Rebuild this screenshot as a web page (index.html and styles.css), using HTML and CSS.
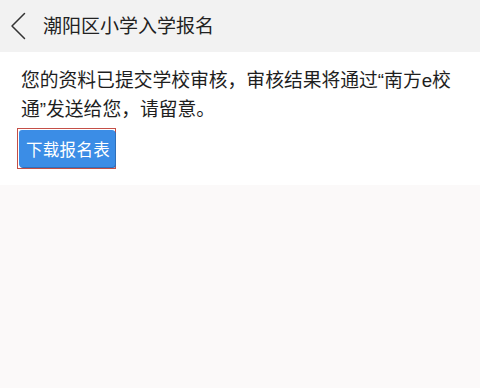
FILE: index.html
```html
<!DOCTYPE html>
<html lang="zh-CN">
<head>
<meta charset="utf-8">
<title>潮阳区小学入学报名</title>
<link rel="stylesheet" href="styles.css">
</head>
<body>
<header class="topbar">
  <svg class="back" width="16" height="28" viewBox="0 0 16 28" aria-hidden="true">
    <path d="M14.5 1.5 L2 14 L14.5 26.5" fill="none" stroke="#333" stroke-width="1.5" stroke-linecap="round" stroke-linejoin="round"/>
  </svg>
  <h1 class="title">潮阳区小学入学报名</h1>
</header>
<main class="content">
  <p class="notice">您的资料已提交学校审核，审核结果将通过“南方e校通”发送给您，请留意。</p>
  <div class="btn-frame">
    <button class="btn" type="button">下载报名表</button>
  </div>
</main>
</body>
</html>
```

FILE: styles.css
```css
html, body {
  margin: 0;
  padding: 0;
}
body {
  width: 480px;
  height: 388px;
  background: #fbf9f9;
  font-family: "Liberation Sans", "Noto Sans CJK SC", sans-serif;
  color: #222;
}
.topbar {
  height: 52px;
  background: #f2f2f2;
  display: flex;
  align-items: center;
  padding-left: 10px;
  box-sizing: border-box;
}
.back {
  display: block;
  flex: none;
}
.title {
  margin: 0 0 0 17px;
  font-size: 19px;
  font-weight: normal;
  color: #222;
  line-height: 1;
}
.content {
  background: #fff;
  padding: 14px 19px 16px 17px;
}
.notice {
  margin: 0 0 0 4px;
  font-size: 18.8px;
  line-height: 29px;
  color: #1e1e1e;
}
.btn-frame {
  display: inline-block;
  margin-top: 4px;
  border: 1px solid #c44f47;
  padding: 1px 0 1px 1px;
}
.btn {
  display: block;
  width: 96px;
  height: 37px;
  border: none;
  border-radius: 3px;
  background: #3b8de6;
  box-shadow: 1px 1px 0 #2f6fb9;
  color: #fff;
  font-family: "Liberation Sans", "Noto Sans CJK SC", sans-serif;
  font-size: 16.5px;
  padding: 0 0 0 2px;
  letter-spacing: 0.3px;
}
```
